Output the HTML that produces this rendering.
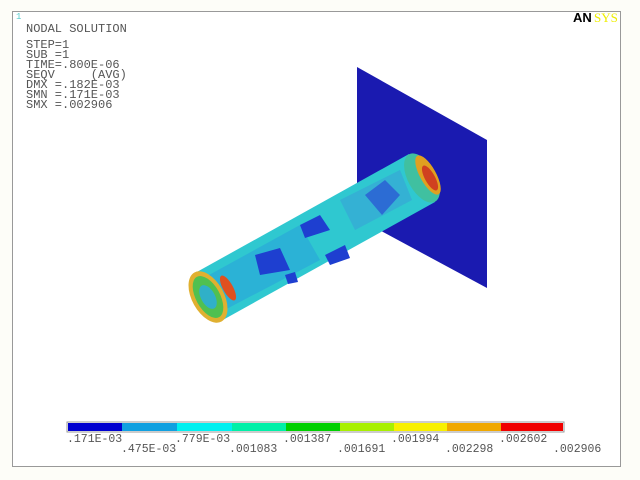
<!DOCTYPE html>
<html><head><style>
html,body{margin:0;padding:0;background:#fff;}
body{width:640px;height:480px;overflow:hidden;position:relative;font-family:"Liberation Mono",monospace;}
.t{position:absolute;font-size:12px;color:#555;line-height:10px;white-space:pre;}
.l{position:absolute;font-size:11.5px;color:#555;line-height:10px;white-space:pre;}
</style></head><body>
<svg width="640" height="480" style="position:absolute;left:0;top:0">
<rect x="0" y="0" width="640" height="480" fill="#fdfdf8"/>
<rect x="12.5" y="11.5" width="608" height="455" fill="#fff" stroke="#999" stroke-width="1"/>
<polygon points="357,67 487,140 487,288 357,218" fill="#1a1ab0"/>
<polygon points="195,273 409,154 435,202 221,321" fill="#2fc8d0"/>
<polygon points="200,280 300,225 320,260 215,315" fill="#2aa8d8" opacity="0.7"/>
<polygon points="255,255 280,248 290,270 260,275" fill="#1e3fd0"/>
<polygon points="365,195 385,180 400,195 382,215" fill="#1e3fd0"/>
<polygon points="300,225 320,215 330,230 305,238" fill="#1e3fd0"/>
<polygon points="325,255 345,245 350,258 330,265" fill="#1e3fd0"/>
<polygon points="285,275 295,272 298,282 288,284" fill="#1e3fd0"/>
<polygon points="340,200 400,170 412,200 355,230" fill="#3a9ad8" opacity="0.5"/>
<ellipse cx="422" cy="178" rx="14" ry="27" transform="rotate(-29 422 178)" fill="#40c0a0"/>
<ellipse cx="428" cy="175" rx="8" ry="22" transform="rotate(-29 428 175)" fill="#e0a020"/>
<ellipse cx="430" cy="178" rx="5" ry="14" transform="rotate(-29 430 178)" fill="#d04020"/>
<ellipse cx="208" cy="297" rx="16" ry="28" transform="rotate(-29 208 297)" fill="#e0b030"/>
<ellipse cx="208" cy="297" rx="12" ry="23" transform="rotate(-29 208 297)" fill="#50c050"/>
<ellipse cx="208" cy="297" rx="7" ry="13" transform="rotate(-29 208 297)" fill="#30b0c8"/>
<ellipse cx="228" cy="288" rx="5" ry="14" transform="rotate(-29 228 288)" fill="#e05020"/>
<rect x="67" y="422" width="497" height="10" fill="#fff" stroke="#999"/>
<rect x="68" y="423" width="54" height="8" fill="#0000d0"/>
<rect x="122" y="423" width="55" height="8" fill="#10a0e0"/>
<rect x="177" y="423" width="55" height="8" fill="#00f0f0"/>
<rect x="232" y="423" width="54" height="8" fill="#00f0a8"/>
<rect x="286" y="423" width="54" height="8" fill="#00d000"/>
<rect x="340" y="423" width="54" height="8" fill="#a8f000"/>
<rect x="394" y="423" width="53" height="8" fill="#f8f000"/>
<rect x="447" y="423" width="54" height="8" fill="#f0a800"/>
<rect x="501" y="423" width="62" height="8" fill="#f00000"/>
<text x="573" y="22" font-family="Liberation Sans" font-weight="bold" font-size="13" fill="#000">AN</text>
<text x="594" y="22" font-family="Liberation Serif" font-size="13" fill="#ee0">SYS</text>
</svg>
<div class="t" style="left:16px;top:12px;color:#5cc;font-size:9px">1</div>
<div class="t" style="left:26px;top:24px">NODAL SOLUTION</div>
<div class="t" style="left:26px;top:40px">STEP=1
SUB =1
TIME=.800E-06
SEQV     (AVG)
DMX =.182E-03
SMN =.171E-03
SMX =.002906</div>
<div class="l" style="left:67px;top:435px">.171E-03</div>
<div class="l" style="left:121px;top:445px">.475E-03</div>
<div class="l" style="left:175px;top:435px">.779E-03</div>
<div class="l" style="left:229px;top:445px">.001083</div>
<div class="l" style="left:283px;top:435px">.001387</div>
<div class="l" style="left:337px;top:445px">.001691</div>
<div class="l" style="left:391px;top:435px">.001994</div>
<div class="l" style="left:445px;top:445px">.002298</div>
<div class="l" style="left:499px;top:435px">.002602</div>
<div class="l" style="left:553px;top:445px">.002906</div>
</body></html>
